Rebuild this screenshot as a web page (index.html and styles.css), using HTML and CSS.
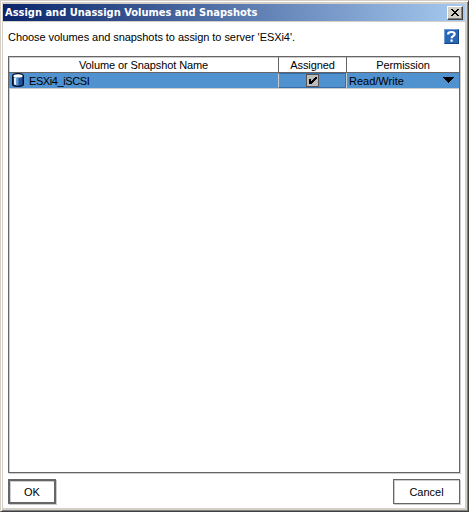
FILE: index.html
```html
<!DOCTYPE html>
<html lang="en">
<head>
<meta charset="utf-8">
<title>Assign and Unassign Volumes and Snapshots</title>
<link rel="stylesheet" href="styles.css">
</head>
<body>
<main class="dialog">
  <header class="titlebar">
    <h1>Assign and Unassign Volumes and Snapshots</h1>
    <button class="close" aria-label="Close"><svg width="8" height="7" viewBox="0 0 8 7" shape-rendering="crispEdges"><path d="M0 0h2v1h1v1h2V1h1V0h2v1H7v1H6v1H5v1h1v1h1v1h1v1H6V6H5V5H3v1H2v1H0V6h1V5h1V4h1V3H2V2H1V1H0z"/></svg></button>
  </header>
  <section class="content">
    <div class="intro">
      <p>Choose volumes and snapshots to assign to server 'ESXi4'.</p>
      <button class="help" aria-label="Help"><svg width="13" height="13" viewBox="1 1 13 13"><path d="M4.2 5.5V4.5Q4.2 3 7.4 3T10.7 5Q10.7 6.4 8.9 7.2Q7.6 7.8 7.6 9.2M7.6 10.5v2.2" fill="none" stroke="#fff" stroke-width="2.2"/></svg></button>
    </div>
    <div class="table">
      <div class="row head"><span>Volume or Snapshot Name</span><span>Assigned</span><span>Permission</span></div>
      <div class="row item">
        <span class="name"><svg width="12" height="14" viewBox="0 0 12 14"><path d="M.7 3Q.7.7 6 .7T11.3 3v8.5Q11.3 13.3 6 13.3T.7 11.5z" fill="#1c5298" stroke="#000a20" stroke-width="1.3"/><path d="M2 4.5h2.5v7.8L2 11.5z" fill="#d9edff"/><path d="M4.5 5h2v7.4h-2z" fill="#5c98d4"/><ellipse cx="6" cy="2.9" rx="4.6" ry="1.7" fill="#fff"/></svg><b>ESXi4_iSCSI</b></span>
        <span class="check"><i><svg width="9" height="9" viewBox="0 0 9 9" shape-rendering="crispEdges"><path d="M1 3h2v2h1V4h1V3h1V2h1V1h2v2H8v1H7v1H6v1H5v1H4v1H1z"/></svg></i></span>
        <span class="permission"><b>Read/Write</b><svg width="11" height="6" viewBox="0 0 11 6" shape-rendering="crispEdges"><path d="M0 0h11v1h-1v1H9v1H8v1H7v1H6v1H5V5H4V4H3V3H2V2H1V1H0z"/></svg></span>
      </div>
    </div>
    <footer><button class="ok"><span>OK</span></button><button class="cancel"><span>Cancel</span></button></footer>
  </section>
</main>
</body>
</html>
```
FILE: styles.css
```css
* { box-sizing: border-box; }
body { margin: 0; font: 11px/15px "Liberation Sans", Arial, sans-serif; color: #000; overflow: hidden; }
button { margin: 0; padding: 0; font: inherit; color: inherit; background: #fff; border: 0; border-radius: 0; }
svg { display: block; flex: none; }
b { font-weight: normal; }
.dialog { width: 469px; height: 512px; padding: 2px 3px 3px 2px; display: flex; flex-direction: column; background: #fff; border: 1px solid #d4d0c8; border-right-color: #404040; border-bottom-color: #404040; box-shadow: inset 1px 1px #fff, inset -1px -1px #808080, inset 2px 2px #d4d0c8, inset -3px -3px #d4d0c8; }
.titlebar { height: 19px; flex: none; display: flex; align-items: center; justify-content: space-between; padding: 0 2px; background: linear-gradient(90deg, #0a246a, #a6caf0); border-top: 1px solid #d4d0c8; border-bottom: 1px solid #d4d0c8; }
h1 { margin: 0; font: bold 11px/16px "DejaVu Sans Condensed", "Noto Sans", sans-serif; color: #fff; letter-spacing: 0; white-space: nowrap; }
.close { width: 16px; height: 14px; display: flex; align-items: center; justify-content: center; background: #d4d0c8; border: 1px solid; border-color: #fff #404040 #404040 #fff; box-shadow: inset -1px -1px #808080; }
.content { flex: 1; min-height: 0; display: flex; flex-direction: column; padding: 7px 5px 4px 5px; }
.intro { height: 27px; flex: none; display: flex; align-items: flex-start; justify-content: space-between; }
p { margin: 1px 0 0; letter-spacing: -.06px; }
.help { width: 15px; height: 15px; margin-right: 1px; background: #2867b5; border: 1px solid #6f9bd0; border-right-color: #164686; border-bottom-color: #164686; display: grid; place-items: center; }
.table { flex: 1; border: 1px solid #666; box-shadow: inset 1px 1px #ccc, 1px 1px #ccc; }
.row { display: grid; grid-template-columns: 269px 68px 1fr; grid-template-rows: 15px; }
.head { height: 16px; line-height: 17px; text-align: center; border-bottom: 1px solid #666; letter-spacing: -.1px; }
.head span + span { border-left: 1px solid #666; }
.item { height: 16px; line-height: 17px; background: #5092d0; border-bottom: 1px solid #ccc; }
.name { display: flex; padding-left: 3px; gap: 5px; letter-spacing: -.4px; }
.check { display: flex; justify-content: center; border: 1px solid #356caa; border-left-color: #ccc; }
.check i { width: 13px; height: 13px; border: 1px solid #555; background: #bbb; display: grid; place-items: center; }
.permission { display: flex; justify-content: space-between; padding: 0 5px 0 2px; border-left: 1px solid #ccc; }
.permission svg { margin-top: 4px; }
footer { display: flex; height: 31px; flex: none; justify-content: space-between; align-items: flex-end; }
footer button { height: 25px; padding-top: 2px; border: 1px solid #666; box-shadow: 1px 1px #ccc, inset 1px 1px #ccc; }
.ok { width: 48px; border-width: 2px; }
.cancel { width: 67px; }
```
